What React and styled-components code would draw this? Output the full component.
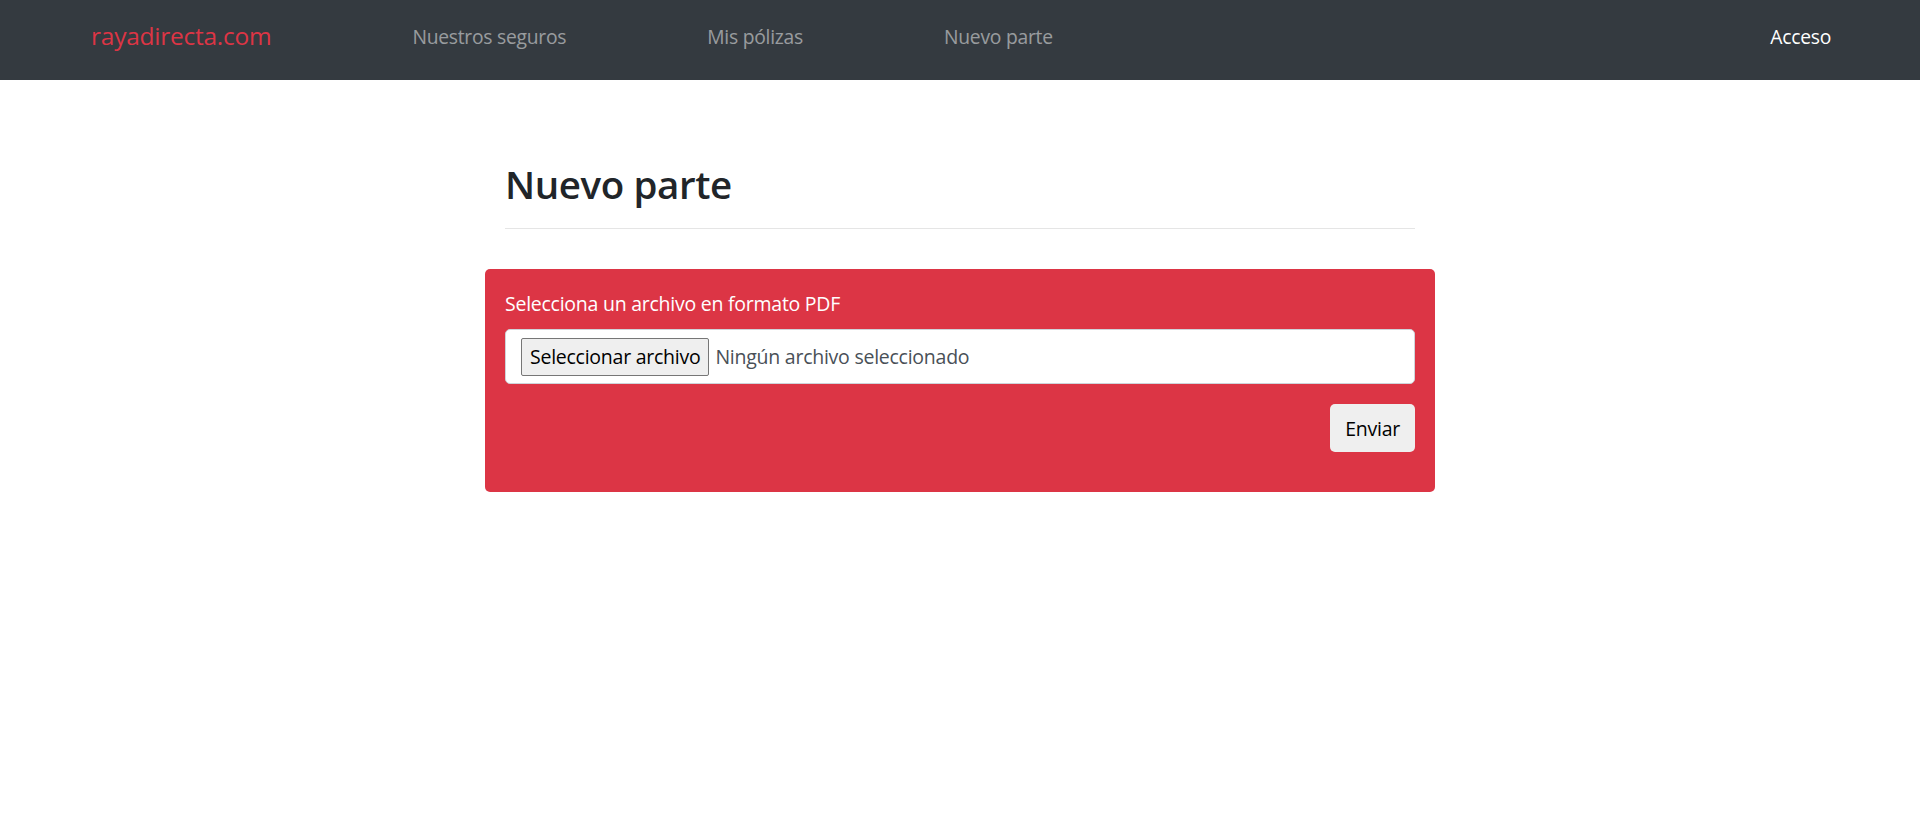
import React from "react";
import styled, { createGlobalStyle } from "styled-components";

const GlobalStyle = createGlobalStyle`
  body {
    margin: 0;
    background: #fff;
    color: #212529;
    font-family: "Open Sans", "Noto Sans", "Liberation Sans", sans-serif;
    letter-spacing: -0.25px;
  }
  * {
    box-sizing: border-box;
  }
`;

const Navbar = styled.nav`
  height: 80px;
  background-color: #343a40;
  display: flex;
  align-items: center;
  padding: 0 89px 7px 91px;
`;

const Brand = styled.a`
  color: #dc3545;
  font-size: 24.5px;
  line-height: 1;
  text-decoration: none;
`;

const NavList = styled.ul`
  display: flex;
  gap: 141px;
  margin: 0 0 0 141px;
  padding: 0;
  list-style: none;
`;

const NavLink = styled.a`
  color: ${(p) => (p.$active ? "#fff" : "rgba(255, 255, 255, 0.5)")};
  font-size: 19.3px;
  line-height: 30px;
  text-decoration: none;
`;

const LoginLink = styled(NavLink)`
  margin-left: auto;
`;

const Main = styled.main`
  width: 950px;
  margin: 0 auto;
  padding-top: 81px;
`;

const PageHeader = styled.div`
  padding: 0 20px;
`;

const Title = styled.h1`
  margin: 0;
  font-size: 38.5px;
  font-weight: 600;
  line-height: 47px;
  letter-spacing: -0.4px;
  color: #212529;
`;

const Divider = styled.hr`
  margin: 20px 0 0;
  border: 0;
  border-top: 1px solid rgba(0, 0, 0, 0.1);
`;

const UploadCard = styled.form`
  margin-top: 40px;
  background-color: #dc3545;
  border-radius: 5px;
  padding: 20px 20px 40px;
`;

const FieldLabel = styled.label`
  display: block;
  color: #fff;
  font-size: 19.5px;
  line-height: 30px;
  margin-bottom: 10px;
`;

const FileField = styled.div`
  height: 55px;
  background: #fff;
  border: 1px solid #ced4da;
  border-radius: 5px;
  display: flex;
  align-items: center;
  padding: 0 15px;
`;

const FileButton = styled.span`
  height: 38px;
  display: inline-flex;
  align-items: center;
  padding: 0 8px;
  background: #efefef;
  border: 1px solid #767676;
  border-radius: 2px;
  color: #000;
  font-size: 19.5px;
`;

const FileName = styled.span`
  margin-left: 6px;
  color: #495057;
  font-size: 19.5px;
`;

const Actions = styled.div`
  display: flex;
  justify-content: flex-end;
  margin-top: 20px;
`;

const SubmitButton = styled.button`
  height: 48px;
  padding: 0 15px;
  background: #efefef;
  border: none;
  border-radius: 5px;
  color: #000;
  font-family: inherit;
  font-size: 19.5px;
  letter-spacing: inherit;
  cursor: pointer;
`;

const App = () => {
  return (
    <>
      <GlobalStyle />
      <Navbar>
        <Brand href="#">rayadirecta.com</Brand>
        <NavList>
          <li>
            <NavLink href="#">Nuestros seguros</NavLink>
          </li>
          <li>
            <NavLink href="#">Mis pólizas</NavLink>
          </li>
          <li>
            <NavLink href="#">Nuevo parte</NavLink>
          </li>
        </NavList>
        <LoginLink href="#" $active>
          Acceso
        </LoginLink>
      </Navbar>
      <Main>
        <PageHeader>
          <Title>Nuevo parte</Title>
          <Divider />
        </PageHeader>
        <UploadCard onSubmit={(e) => e.preventDefault()}>
          <FieldLabel htmlFor="parte">Selecciona un archivo en formato PDF</FieldLabel>
          <FileField id="parte">
            <FileButton>Seleccionar archivo</FileButton>
            <FileName>Ningún archivo seleccionado</FileName>
          </FileField>
          <Actions>
            <SubmitButton type="submit">Enviar</SubmitButton>
          </Actions>
        </UploadCard>
      </Main>
    </>
  );
};

export default App;
